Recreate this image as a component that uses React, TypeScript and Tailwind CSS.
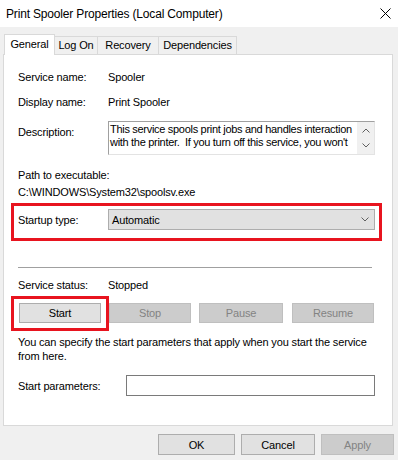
import React from "react";

const font = { fontFamily: '"Liberation Sans", Arial, sans-serif' };

function Chevron({ dir }: { dir: "up" | "down" }) {
  return (
    <svg width="8" height="5" viewBox="0 0 8 5" className="block">
      {dir === "down" ? (
        <path d="M0.5 0.5 L4 4 L7.5 0.5" fill="none" stroke="#606060" strokeWidth="1" />
      ) : (
        <path d="M0.5 4.5 L4 1 L7.5 4.5" fill="none" stroke="#606060" strokeWidth="1" />
      )}
    </svg>
  );
}

export default function App() {
  return (
    <div
      className="w-[398px] h-[460px] bg-[#f0f0f0] flex flex-col text-[11px] tracking-[-0.15px] text-black overflow-hidden"
      style={font}
    >
      {/* Title bar */}
      <div className="h-[27px] bg-white flex items-center justify-between pl-[6px] pr-[7px] shrink-0">
        <span className="text-[12px] leading-[14px] tracking-[-0.17px]">Print Spooler Properties (Local Computer)</span>
        <svg width="11" height="11" viewBox="0 0 11 11" className="block">
          <path d="M0.5 0.5 L10.5 10.5 M10.5 0.5 L0.5 10.5" stroke="#000" strokeWidth="1" />
        </svg>
      </div>

      {/* Tabs */}
      <div className="flex items-end pl-[4px] pt-[7px] h-[27px] shrink-0">
        <div className="relative z-10 w-[51px] h-[21px] -mb-px pb-[1px] bg-white border border-b-0 border-[#d9d9d9] flex items-center justify-center leading-[13px]">
          General
        </div>
        <div className="w-[43px] h-[18px] bg-[#f0f0f0] border border-l-0 border-b-0 border-[#d9d9d9] flex items-center justify-center leading-[13px]">
          Log On
        </div>
        <div className="w-[61px] h-[18px] bg-[#f0f0f0] border border-l-0 border-b-0 border-[#d9d9d9] flex items-center justify-center leading-[13px]">
          Recovery
        </div>
        <div className="w-[78px] h-[18px] bg-[#f0f0f0] border border-l-0 border-b-0 border-[#d9d9d9] flex items-center justify-center leading-[13px]">
          Dependencies
        </div>
      </div>

      {/* Panel */}
      <div className="ml-[3px] w-[390px] h-[372px] bg-white border border-[#d9d9d9] flex flex-col shrink-0">
        <div className="flex pl-[14px] mt-[15px] leading-[14px]">
          <div className="w-[90px]">Service name:</div>
          <div>Spooler</div>
        </div>
        <div className="flex pl-[14px] mt-[11px] leading-[14px]">
          <div className="w-[90px]">Display name:</div>
          <div>Print Spooler</div>
        </div>
        <div className="flex pl-[14px] mt-[12px] leading-[14px]">
          <div className="w-[90px] pt-[4px]">Description:</div>
          <div className="w-[267px] h-[34px] flex border-t border-l border-[#a0a0a0] border-r border-b border-r-[#e3e3e3] border-b-[#e3e3e3] bg-white">
            <div className="flex-1 overflow-hidden pl-[1px] pt-[1px] leading-[13px] whitespace-nowrap tracking-[-0.3px]">
              <div>This service spools print jobs and handles interaction</div>
              <div>with the printer.&nbsp; If you turn off this service, you won't</div>
            </div>
            <div className="w-[17px] bg-[#f0f0f0] flex flex-col items-center pt-[6px] gap-[10px]">
              <Chevron dir="up" />
              <Chevron dir="down" />
            </div>
          </div>
        </div>
        <div className="pl-[14px] mt-[13px] leading-[14px]">Path to executable:</div>
        <div className="pl-[14px] mt-[3px] leading-[14px]">C:\WINDOWS\System32\spoolsv.exe</div>

        {/* Startup type highlight */}
        <div className="ml-[7px] mt-[4px] w-[371px] h-[38px] border-[3px] border-[#e8141f] flex items-start pl-[4px] pt-[3px]">
          <div className="w-[90px] leading-[14px] pt-[4px]">Startup type:</div>
          <div className="w-[267px] h-[21px] bg-[#e1e1e1] border border-[#adadad] flex items-center justify-between pl-[3px] pr-[5px]">
            <span className="leading-[14px]">Automatic</span>
            <Chevron dir="down" />
          </div>
        </div>

        <div className="ml-[14px] mt-[26px] w-[354px] h-px bg-[#a0a0a0]" />

        <div className="flex pl-[14px] mt-[10px] leading-[14px]">
          <div className="w-[90px]">Service status:</div>
          <div>Stopped</div>
        </div>

        <div className="flex items-start pl-[7px] mt-[4px]">
          <div className="w-[98px] h-[35px] border-[3px] border-[#e8141f] pl-[5px] pt-[4px]">
            <div className="w-[82px] h-[20px] bg-[#e1e1e1] border border-[#adadad] flex items-center justify-center leading-[14px]">
              Start
            </div>
          </div>
          <div className="mt-[7px] w-[82px] h-[20px] bg-[#cccccc] border border-[#bfbfbf] flex items-center justify-center text-[#838383] leading-[14px]">
            Stop
          </div>
          <div className="mt-[7px] ml-[8px] w-[84px] h-[20px] bg-[#cccccc] border border-[#bfbfbf] flex items-center justify-center text-[#838383] leading-[14px]">
            Pause
          </div>
          <div className="mt-[7px] ml-[9px] w-[82px] h-[20px] bg-[#cccccc] border border-[#bfbfbf] flex items-center justify-center text-[#838383] leading-[14px]">
            Resume
          </div>
        </div>

        <div className="pl-[14px] mt-[4px] leading-[14px] whitespace-nowrap">
          You can specify the start parameters that apply when you start the service
          <br />
          from here.
        </div>

        <div className="flex items-center pl-[14px] mt-[12px]">
          <div className="w-[108px] leading-[14px]">Start parameters:</div>
          <div className="w-[249px] h-[21px] bg-white border border-[#7a7a7a]" />
        </div>
      </div>

      {/* Bottom buttons */}
      <div className="flex justify-end pr-[4px] mt-[8px] gap-[6px]">
        <div className="w-[77px] h-[21px] bg-[#e1e1e1] border border-[#adadad] flex items-center justify-center leading-[14px]">
          OK
        </div>
        <div className="w-[74px] h-[21px] bg-[#e1e1e1] border border-[#adadad] flex items-center justify-center leading-[14px]">
          Cancel
        </div>
        <div className="w-[73px] h-[21px] bg-[#cccccc] border border-[#bfbfbf] flex items-center justify-center text-[#838383] leading-[14px]">
          Apply
        </div>
      </div>
    </div>
  );
}
